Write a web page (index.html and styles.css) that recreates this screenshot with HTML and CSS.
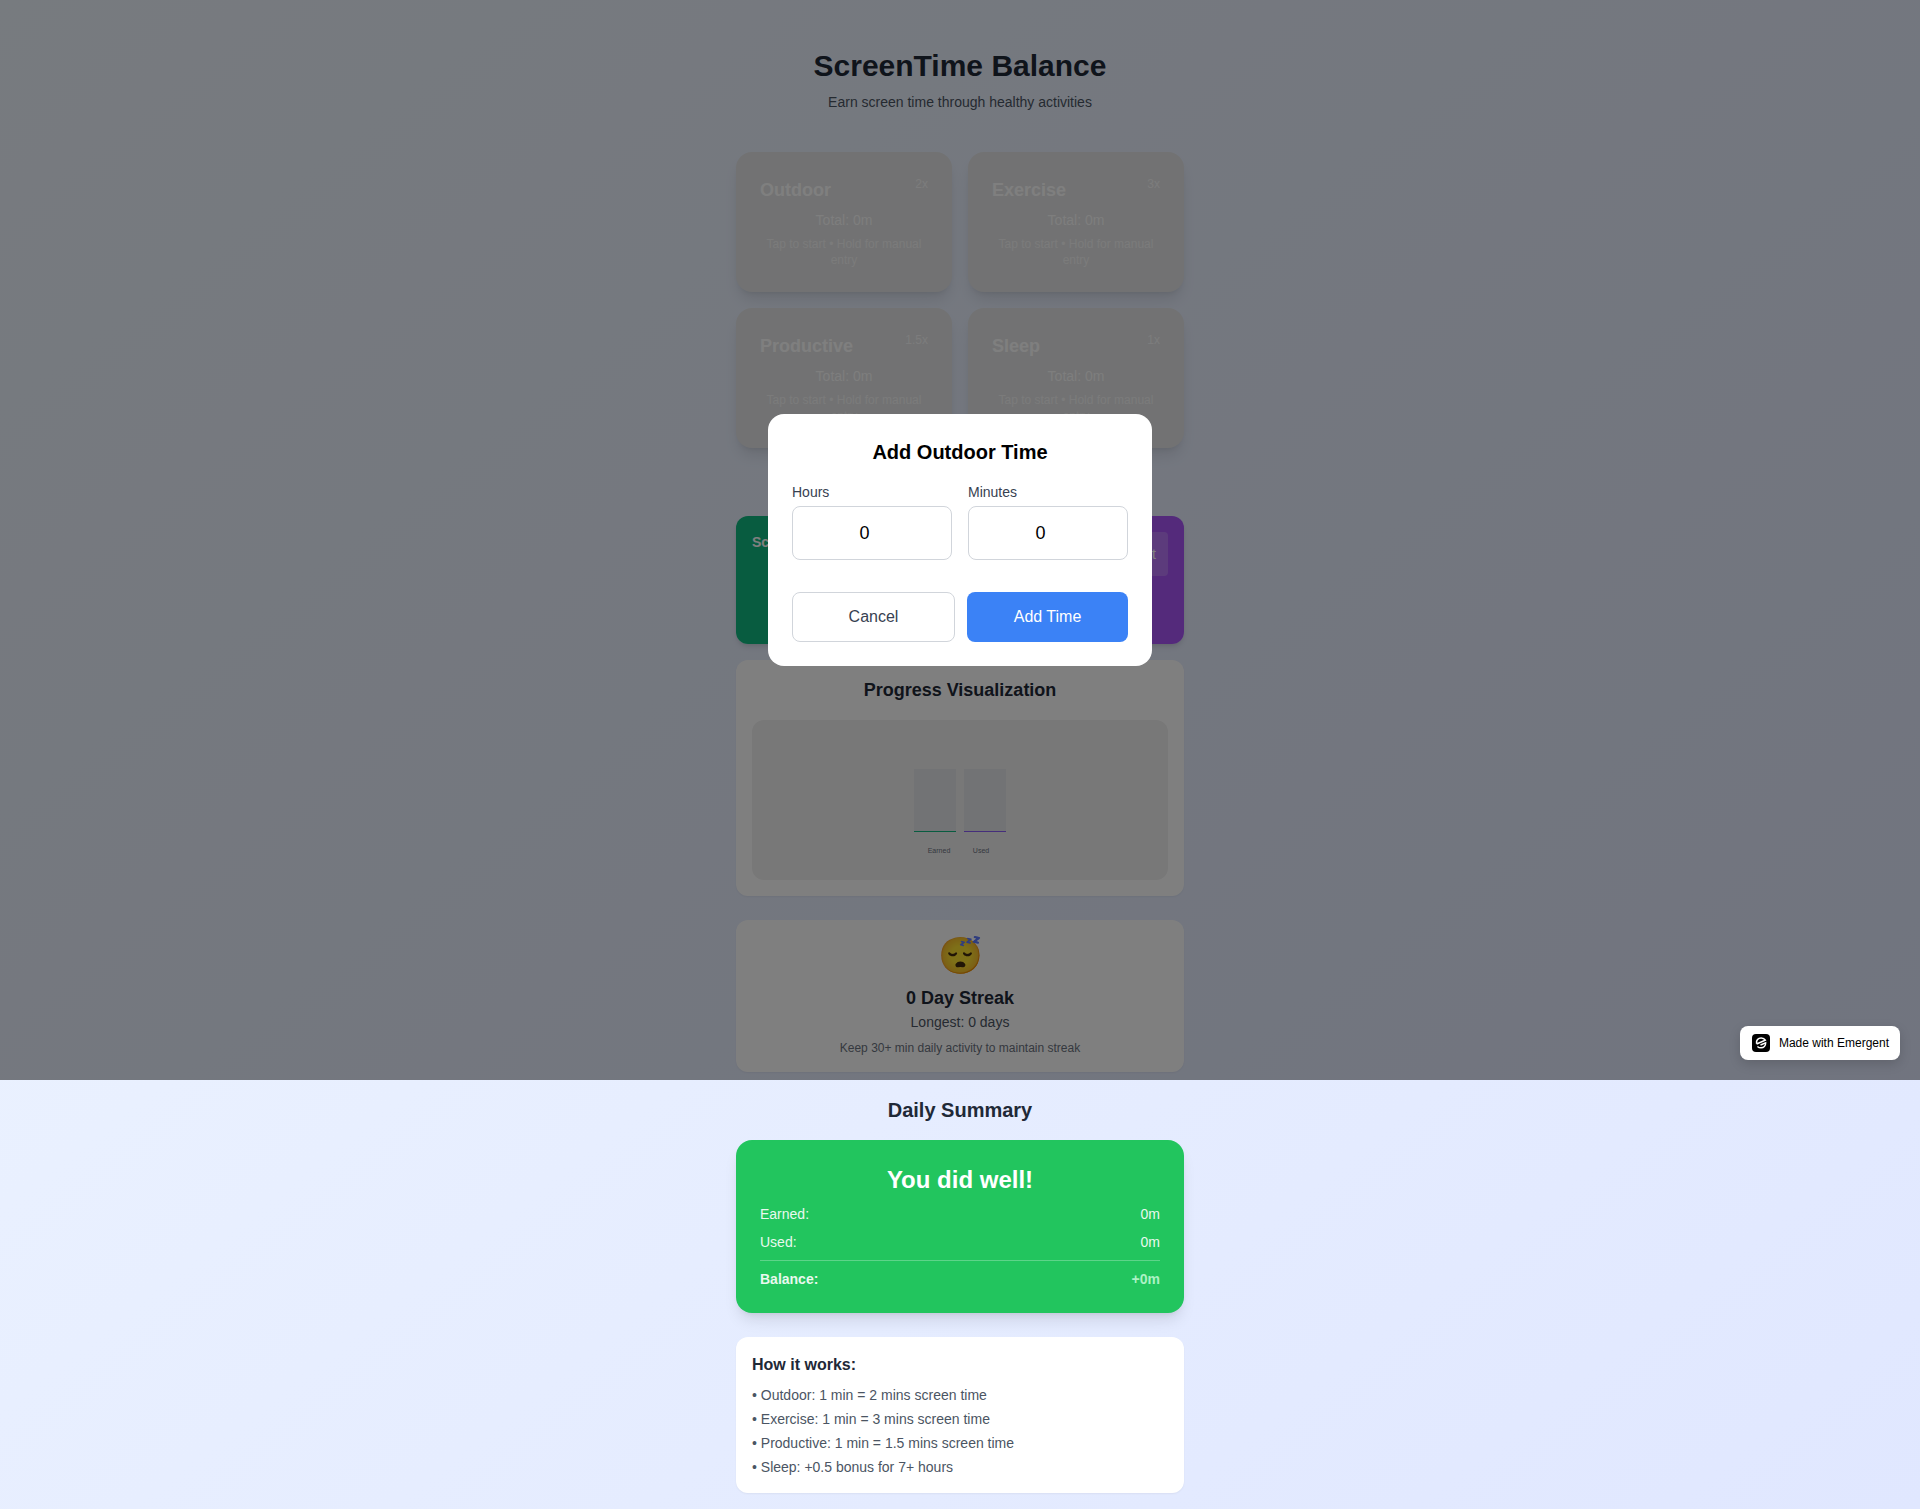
FILE: index.html
```html
<!DOCTYPE html>
<html lang="en">
<head>
<meta charset="utf-8">
<meta name="viewport" content="width=device-width, initial-scale=1">
<title>ScreenTime Balance</title>
<link rel="stylesheet" href="styles.css">
</head>
<body>
<section class="stage">
  <div class="column">
    <header class="page-header">
      <h1>ScreenTime Balance</h1>
      <p>Earn screen time through healthy activities</p>
    </header>

    <div class="activities">
      <article class="activity">
        <div class="activity-head"><h3>Outdoor</h3><span>2x</span></div>
        <p class="total">Total: 0m</p>
        <p class="hint">Tap to start • Hold for manual entry</p>
      </article>
      <article class="activity">
        <div class="activity-head"><h3>Exercise</h3><span>3x</span></div>
        <p class="total">Total: 0m</p>
        <p class="hint">Tap to start • Hold for manual entry</p>
      </article>
      <article class="activity">
        <div class="activity-head"><h3>Productive</h3><span>1.5x</span></div>
        <p class="total">Total: 0m</p>
        <p class="hint">Tap to start • Hold for manual entry</p>
      </article>
      <article class="activity">
        <div class="activity-head"><h3>Sleep</h3><span>1x</span></div>
        <p class="total">Total: 0m</p>
        <p class="hint">Tap to start • Hold for manual entry</p>
      </article>
    </div>

    <div class="usage">
      <h3>Screen</h3>
      <button type="button" class="start">Start</button>
    </div>

    <div class="card progress">
      <h3>Progress Visualization</h3>
      <div class="chart">
        <svg width="120" height="100" viewBox="0 0 120 100" role="img" aria-label="Earned and used time">
          <rect x="14" y="19" width="42" height="62" fill="#e5e7eb"/>
          <rect x="64" y="19" width="42" height="62" fill="#e5e7eb"/>
          <rect x="14" y="81" width="42" height="1" fill="#10b981"/>
          <rect x="64" y="81" width="42" height="1" fill="#8b5cf6"/>
          <text x="39" y="103" text-anchor="middle">Earned</text>
          <text x="81" y="103" text-anchor="middle">Used</text>
        </svg>
      </div>
    </div>

    <div class="card streak">
      <div class="emoji">😴</div>
      <h3>0 Day Streak</h3>
      <p class="longest">Longest: 0 days</p>
      <p class="note">Keep 30+ min daily activity to maintain streak</p>
    </div>
  </div>

  <div class="overlay">
    <form class="modal">
      <h2>Add Outdoor Time</h2>
      <div class="fields">
        <div class="field">
          <label for="hours">Hours</label>
          <input id="hours" type="number" min="0" value="0">
        </div>
        <div class="field">
          <label for="minutes">Minutes</label>
          <input id="minutes" type="number" min="0" max="59" value="0">
        </div>
      </div>
      <div class="actions">
        <button type="button" class="cancel">Cancel</button>
        <button type="button" class="add">Add Time</button>
      </div>
    </form>
  </div>

  <a class="made-with" href="#">
    <svg width="20" height="20" viewBox="0 0 20 20" aria-hidden="true">
      <rect x="1" y="1" width="18" height="18" rx="4" fill="#000"/>
      <path d="M5.600 10.600C4.900 7.400 7.200 5 10.200 5c1.900 0 3.300.8 4.100 2.200L5.600 11" fill="none" stroke="#fff" stroke-width="1.600"/>
      <path d="M6.400 13.400c1 .9 2.200 1.400 3.600 1.400 2.700 0 4.800-2 4.700-5L9.500 12" fill="none" stroke="#fff" stroke-width="1.400"/>
    </svg>
    <span>Made with Emergent</span>
  </a>
</section>

<section class="column lower">
  <h2>Daily Summary</h2>
  <div class="summary">
    <h3>You did well!</h3>
    <dl>
      <div><dt>Earned:</dt><dd>0m</dd></div>
      <div><dt>Used:</dt><dd>0m</dd></div>
      <div class="balance"><dt>Balance:</dt><dd>+0m</dd></div>
    </dl>
  </div>
  <div class="card how">
    <h4>How it works:</h4>
    <ul>
      <li>• Outdoor: 1 min = 2 mins screen time</li>
      <li>• Exercise: 1 min = 3 mins screen time</li>
      <li>• Productive: 1 min = 1.5 mins screen time</li>
      <li>• Sleep: +0.5 bonus for 7+ hours</li>
    </ul>
  </div>
</section>
</body>
</html>
```
FILE: styles.css
```css
*, *::before, *::after { box-sizing: border-box; }

body {
  margin: 0;
  min-height: 100vh;
  font-family: "Liberation Sans", Arial, sans-serif;
  font-size: 14px;
  line-height: 20px;
  color: #1f2937;
  background: linear-gradient(to bottom right, #eff6ff, #e0e7ff);
}

h1, h2, h3, h4, p, dl, dd, ul { margin: 0; padding: 0; }
ul { list-style: none; }
button, input { font-family: inherit; }

.column {
  width: 100%;
  max-width: 480px;
  margin: 0 auto;
  padding: 0 16px;
}

.stage {
  position: relative;
  padding-bottom: 8px;
}

.page-header {
  padding: 48px 0 40px;
  text-align: center;
}
.page-header h1 {
  margin-bottom: 8px;
  font-size: 30px;
  line-height: 36px;
}
.page-header p { color: #4b5563; }

.activities {
  display: grid;
  grid-template-columns: 1fr 1fr;
  gap: 16px;
  margin-bottom: 68px;
}
.activity {
  padding: 24px;
  border-radius: 16px;
  color: #fff;
  text-align: center;
  background: #e4e5e6;
  box-shadow: 0 10px 15px -3px rgba(0, 0, 0, .1), 0 4px 6px -4px rgba(0, 0, 0, .1);
}
.activity-head {
  display: flex;
  justify-content: space-between;
  align-items: flex-start;
  margin-bottom: 6px;
}
.activity-head h3 { font-size: 18px; line-height: 28px; }
.activity-head span { font-size: 12px; line-height: 16px; opacity: .8; }
.total { margin-bottom: 6px; opacity: .9; }
.hint { font-size: 12px; line-height: 16px; opacity: .7; }

.usage {
  display: flex;
  justify-content: space-between;
  align-items: flex-start;
  min-height: 128px;
  margin-bottom: 16px;
  padding: 16px;
  border-radius: 12px;
  color: #fff;
  background: linear-gradient(to right, #10b981 50%, #a855f7 50%);
  box-shadow: 0 4px 6px -1px rgba(0, 0, 0, .1), 0 2px 4px -2px rgba(0, 0, 0, .1);
}
.usage h3 { font-size: 14px; line-height: 20px; }
.start {
  padding: 12px;
  border: 0;
  border-radius: 4px;
  color: #fff;
  font-size: 14px;
  line-height: 20px;
  background: rgba(255, 255, 255, .2);
}

.card {
  padding: 16px;
  border-radius: 12px;
  background: #fff;
  box-shadow: 0 1px 2px rgba(0, 0, 0, .05);
}
.card h3 { font-size: 18px; line-height: 28px; text-align: center; }

.progress { margin-bottom: 24px; }
.progress h3 { margin-bottom: 16px; }
.chart {
  display: flex;
  justify-content: center;
  align-items: center;
  height: 160px;
  border-radius: 12px;
  background: #f1f1f1;
}
.chart svg { overflow: visible; }
.chart text { font-size: 7px; fill: #6b7280; }

.streak { text-align: center; }
.emoji { margin-bottom: 8px; font-size: 36px; line-height: 40px; }
.longest { margin-bottom: 8px; color: #4b5563; }
.note { font-size: 12px; line-height: 16px; color: #6b7280; }

.overlay {
  position: absolute;
  inset: 0;
  display: flex;
  justify-content: center;
  align-items: center;
  padding: 16px;
  background: rgba(0, 0, 0, .5);
}
.modal {
  width: 100%;
  max-width: 384px;
  padding: 24px;
  border-radius: 16px;
  color: #000;
  background: #fff;
}
.modal h2 {
  margin-bottom: 16px;
  font-size: 20px;
  line-height: 28px;
  text-align: center;
}
.fields { display: flex; gap: 16px; margin-bottom: 32px; }
.field {
  display: flex;
  flex: 1;
  flex-direction: column;
  gap: 4px;
  min-width: 0;
}
.field label { color: #374151; }
.field input {
  width: 100%;
  height: 54px;
  padding: 12px;
  border: 1px solid #d1d5db;
  border-radius: 8px;
  color: #000;
  font-size: 18px;
  line-height: 28px;
  text-align: center;
  background: #fff;
}
.actions { display: flex; gap: 12px; }
.actions button {
  flex: 1;
  padding: 12px 16px;
  border: 0;
  border-radius: 8px;
  font-size: 16px;
  line-height: 24px;
}
.actions .cancel {
  border: 1px solid #d1d5db;
  color: #374151;
  background: #fff;
}
.actions .add { color: #fff; background: #3b82f6; }

.made-with {
  position: absolute;
  right: 20px;
  bottom: 20px;
  display: flex;
  align-items: center;
  gap: 8px;
  padding: 7px 11px;
  border-radius: 8px;
  color: #000;
  font-size: 12px;
  text-decoration: none;
  background: #fff;
  box-shadow: 0 4px 12px rgba(0, 0, 0, .15);
}

.lower { padding: 16px; }
.lower h2 {
  margin-bottom: 16px;
  font-size: 20px;
  line-height: 28px;
  text-align: center;
}
.summary {
  margin-bottom: 24px;
  padding: 24px;
  border-radius: 16px;
  color: #fff;
  background: #22c55e;
  box-shadow: 0 10px 15px -3px rgba(0, 0, 0, .1), 0 4px 6px -4px rgba(0, 0, 0, .1);
}
.summary h3 {
  margin-bottom: 8px;
  font-size: 24px;
  line-height: 32px;
  text-align: center;
}
.summary dl { display: grid; gap: 8px; opacity: .9; }
.summary dl div { display: flex; justify-content: space-between; }
.summary .balance {
  padding-top: 8px;
  border-top: 1px solid rgba(255, 255, 255, .3);
  font-weight: 700;
}
.balance dd { color: #bbf7d0; }

.how h4 { margin-bottom: 8px; font-size: 16px; line-height: 24px; }
.how ul { display: grid; gap: 4px; color: #4b5563; }
```
